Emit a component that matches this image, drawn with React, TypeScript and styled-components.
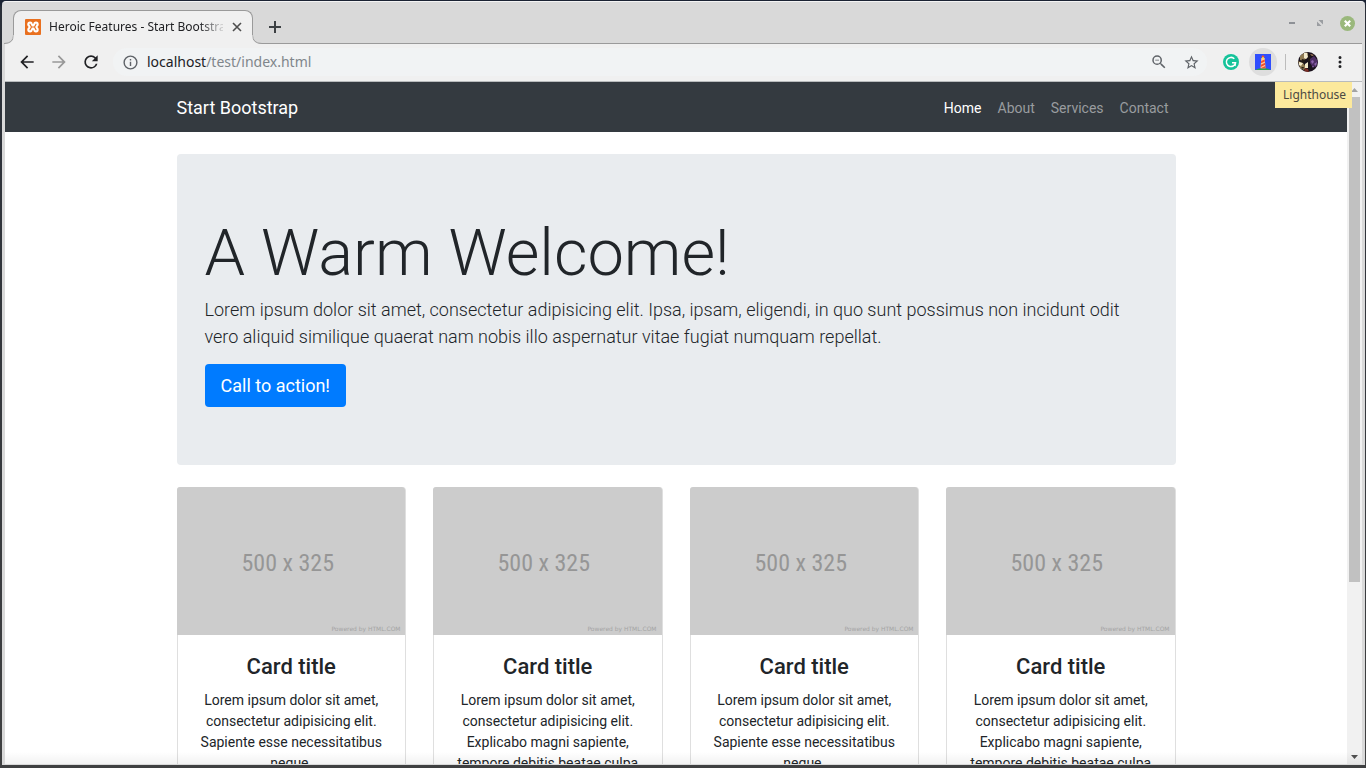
import React from "react";
import styled, { createGlobalStyle } from "styled-components";

const GlobalStyle = createGlobalStyle`
  *, *::before, *::after { box-sizing: border-box; }
  body { margin: 0; background: #3c3c3c; }
  button, input { font: inherit; }
`;

const Desktop = styled.div`
  display: flex;
  height: 100vh;
  padding: 1px 1px 3px 2px;
  background: linear-gradient(#1b2333 0 4px, #2a2f38 8px, #3f4041);
`;

const Window = styled.div`
  flex: 1;
  min-width: 0;
  display: flex;
  flex-direction: column;
  padding: 1px 3px 1px;
  background: #d9d9d9;
  border: 0 solid #f4f4f4;
  border-top-width: 1px;
  border-radius: 4px 4px 0 0;
  font-family: "Noto Sans", sans-serif;
`;

const TabStrip = styled.header`
  display: flex;
  align-items: flex-end;
  height: 41px;
  flex: none;
  padding-left: 8px;
  border-bottom: 1px solid #9a9a9a;
`;

const Tab = styled.div`
  display: flex;
  align-items: center;
  gap: 8px;
  position: relative;
  width: 240px;
  height: 34px;
  margin-bottom: -1px;
  padding: 0 9px 1px 11px;
  background: #f0f0f0;
  border: 1px solid #9a9a9a;
  border-bottom: 0;
  border-radius: 8px 8px 0 0;
`;

const TabFoot = styled.svg<{ $side: "left" | "right" }>`
  position: absolute;
  bottom: 0;
  ${(p) => (p.$side === "left" ? "left: -10px;" : "right: -10px;")}
  width: 10px;
  height: 9px;
`;

const TabTitle = styled.span`
  flex: 1;
  overflow: hidden;
  white-space: nowrap;
  font-size: 12px;
  line-height: 18px;
  color: #202124;
  mask-image: linear-gradient(to right, #000 150px, transparent 178px);
`;

const IconButton = styled.button<{ $size?: number; $tint?: string; $color?: string }>`
  display: grid;
  place-items: center;
  flex: none;
  width: ${(p) => p.$size ?? 32}px;
  height: ${(p) => p.$size ?? 32}px;
  padding: 0;
  border: 0;
  border-radius: 50%;
  background: ${(p) => p.$tint ?? "transparent"};
  color: ${(p) => p.$color ?? "#202124"};
`;

const NewTab = styled.div`
  align-self: center;
  padding-left: 8px;
  padding-top: 8px;
  flex: 1;
`;

const WindowControls = styled.div`
  display: flex;
  align-items: center;
  align-self: center;
  gap: 12px;
  padding-right: 7px;
`;

const Toolbar = styled.div`
  display: flex;
  align-items: center;
  flex: none;
  height: 38px;
  padding: 0 6px 1px;
  background: #f0f0f0;
  border-bottom: 1px solid #b8bbbd;
`;

const AddressBar = styled.div`
  display: flex;
  align-items: center;
  flex: 1;
  min-width: 0;
  height: 28px;
  margin: 0 8px 0 6px;
  padding-left: 9px;
  border-radius: 14px;
  background: #f1f3f4;
`;

const Address = styled.span`
  flex: 1;
  padding-left: 9px;
  font-size: 14px;
  line-height: 20px;
  color: #80868b;
  b { font-weight: 400; color: #202124; }
`;

const Divider = styled.span`
  width: 1px;
  height: 16px;
  margin: 0 8px;
  background: #bcbcbc;
`;

const Extension = styled.div`
  position: relative;
  margin-left: 2px;
`;

const ProfileSlot = styled.div`
  margin-right: 2px;
`;

const Tooltip = styled.div`
  position: absolute;
  z-index: 2;
  top: 34px;
  left: 26px;
  padding: 4px 6px 4px 8px;
  background: #fce99c;
  color: #4c4a43;
  font-size: 12px;
  line-height: 18px;
`;

const Viewport = styled.div`
  position: relative;
  display: flex;
  flex: 1;
  min-height: 0;
  background: #fff;
`;

const BottomShade = styled.div`
  position: absolute;
  inset: auto 0 0 0;
  height: 12px;
  background: linear-gradient(transparent, rgba(0, 0, 0, 0.05));
`;

const Page = styled.div`
  flex: 1;
  min-width: 0;
  overflow: hidden;
  font-family: Roboto, sans-serif;
  font-size: 14px;
  line-height: 21px;
  color: #212529;
`;

const Scrollbar = styled.div`
  display: flex;
  flex-direction: column;
  align-items: center;
  width: 15px;
  background: #f1f1f1;
`;

const ScrollTrack = styled.div`
  flex: 1;
  width: 11px;
`;

const ScrollThumb = styled.div`
  height: 74.4%;
  background: #c1c1c1;
`;

const Navbar = styled.nav`
  background: #343a40;
`;

const Container = styled.div`
  width: calc(100% - 28px);
  max-width: 999px;
  margin: 0 auto;
`;

const NavInner = styled(Container)`
  display: flex;
  align-items: center;
  justify-content: space-between;
  height: 50px;
`;

const Brand = styled.a`
  color: #fff;
  font-size: 18px;
  line-height: 27px;
  text-decoration: none;
`;

const NavList = styled.ul`
  display: flex;
  gap: 2px;
  margin: 0;
  padding: 0;
  list-style: none;
`;

const NavLink = styled.a<{ $active?: boolean }>`
  display: block;
  padding: 9px 7px 7px;
  text-decoration: none;
  color: ${(p) => (p.$active ? "#fff" : "#999c9f")};
`;

const Jumbotron = styled.header`
  margin: 22px 0;
  padding: 60px 28px 58px;
  border-radius: 4px;
  background: #e9ecef;
`;

const Headline = styled.h1`
  margin: 0 0 4px;
  font-size: 65px;
  line-height: 78px;
  font-weight: 300;
`;

const Lead = styled.p`
  margin: 0 0 14px;
  font-size: 18px;
  line-height: 27px;
  font-weight: 300;
`;

const CallToAction = styled.a`
  display: inline-block;
  padding: 8px 16px;
  border-radius: 4px;
  background: #007bff;
  color: #fff;
  font-size: 18px;
  line-height: 27px;
  text-decoration: none;
`;

const CardGrid = styled.div`
  display: grid;
  grid-template-columns: repeat(4, 1fr);
  gap: 27px;
  text-align: center;
`;

const Card = styled.article`
  border: 1px solid #dfdfdf;
  border-top: 0;
  border-radius: 4px;
`;

const CardImage = styled.svg`
  display: block;
  width: calc(100% + 1px);
  margin-left: -1px;
  border-radius: 3px 3px 0 0;
  background: #ccc;
`;

const CardBody = styled.div`
  padding: 18px;
`;

const CardTitle = styled.h4`
  margin: 0 0 10px;
  font-size: 22px;
  line-height: 27px;
  font-weight: 500;
`;

const CardText = styled.p`
  margin: 0;
`;

const cards = [
  "Lorem ipsum dolor sit amet, consectetur adipisicing elit. Sapiente esse necessitatibus neque.",
  "Lorem ipsum dolor sit amet, consectetur adipisicing elit. Explicabo magni sapiente, tempore debitis beatae culpa natus architecto.",
  "Lorem ipsum dolor sit amet, consectetur adipisicing elit. Sapiente esse necessitatibus neque.",
  "Lorem ipsum dolor sit amet, consectetur adipisicing elit. Explicabo magni sapiente, tempore debitis beatae culpa natus architecto.",
];

const links = ["Home", "About", "Services", "Contact"];

const Favicon = () => (
  <svg width="16" height="16" viewBox="0 0 16 16">
    <rect width="16" height="16" rx="1" fill="#e9701f" />
    <g fill="#fff">
      <circle cx="5" cy="5.200" r="2.700" />
      <circle cx="11" cy="5.200" r="2.700" />
      <circle cx="5" cy="10.800" r="2.700" />
      <circle cx="11" cy="10.800" r="2.700" />
      <rect x="3.500" y="5" width="9" height="6" />
    </g>
    <path d="M5 5.200L6.500 8 5 10.800M11 5.200L9.500 8l1.500 2.800M6.500 8h3" fill="none" stroke="#e9701f" strokeWidth="1.200" strokeLinecap="round" />
  </svg>
);

const Glyph = ({ d, size = 20 }: { d: string; size?: number }) => (
  <svg width={size} height={size} viewBox="0 0 24 24" fill="currentColor"><path d={d} /></svg>
);

const Grammarly = () => (
  <svg width="16" height="16" viewBox="0 0 16 16">
    <circle cx="8" cy="8" r="8" fill="#15c39a" />
    <path d="M11.300 4.800A4.600 4.600 0 1 0 12.500 8.800H9M12.500 8.800l-.6 3.200" fill="none" stroke="#fff" strokeWidth="1.500" />
  </svg>
);

const LighthouseIcon = () => (
  <svg width="16" height="16" viewBox="0 0 16 16">
    <rect width="16" height="16" fill="#304ffe" />
    <path d="M0 16q8-4 16 0z" fill="#2e9e4f" />
    <path d="M6.300 4h3.400l.8 10.200h-5z" fill="#ffc9a0" />
    <path d="M6 3.200L8 1l2 2.200zM6.200 7l3.500-1.500.2 2-3.900 1.800zM5.900 10.800l4.200-2 .2 2-4.500 2.200zM5.500 14.200l4.900-2.200.1 2.200z" fill="#f4512c" />
    <rect x="7" y="3.200" width="2" height="2" fill="#ffe04d" />
  </svg>
);

const Avatar = () => (
  <svg width="20" height="20" viewBox="0 0 20 20">
    <defs><clipPath id="face"><circle cx="10" cy="10" r="10" /></clipPath></defs>
    <g clipPath="url(#face)">
      <rect width="20" height="20" fill="#1a121c" />
      <path d="M2 4l5-4 3 1-1 5-4 3-3-1zM0 9l5 2 3 4-2 3-4-2z" fill="#8f7a52" />
      <path d="M6 1l3 0 1 4-2 2-2-1zM1 10l4 1-2 3-2-1zM7 12l3-2v6l-3 0z" fill="#f3e9cb" />
      <path d="M4 7l4 1-2 3-3-1zM10 2l2 1v6l-2 1zM3 15l3 0-1 2z" fill="#231a17" />
      <path d="M12 7l4-3 4 5-2 6-4-1-2-3z" fill="#4c2d63" />
      <path d="M13 9l2-1 1 2-2 2zM16 12l3-2-1 4zM14 14l2 0-1 2z" fill="#8b62ab" />
      <path d="M7 16l3 1 1 3H6z" fill="#7d2f26" />
      <path d="M12 2l4 1-2 1z" fill="#b58a62" />
    </g>
  </svg>
);

const Arrow = ({ up }: { up?: boolean }) => (
  <svg width="15" height="15" viewBox="0 0 15 15">
    <path d={up ? "M4 10h7L7.500 6z" : "M4 6h7l-3.500 4z"} fill={up ? "#a3a3a3" : "#505050"} />
  </svg>
);

export default function App() {
  return (
    <>
      <GlobalStyle />
      <Desktop>
        <Window>
          <TabStrip>
            <Tab>
              <TabFoot $side="left" viewBox="0 0 10 9">
                <path d="M0 9V8.500Q9.500 8.500 9.500 0H10V9z" fill="#f0f0f0" />
                <path d="M0 8.500Q9.500 8.500 9.500 0" fill="none" stroke="#9a9a9a" />
                <path d="M10 0V9" stroke="#f0f0f0" />
              </TabFoot>
              <Favicon />
              <TabTitle>Heroic Features - Start Bootstrap</TabTitle>
              <IconButton $size={12} aria-label="Close tab">
                <svg width="10" height="10" viewBox="0 0 10 10"><path d="M1 1l8 8M9 1l-8 8" stroke="#4d4d4d" strokeWidth="1.600" /></svg>
              </IconButton>
              <TabFoot $side="right" viewBox="0 0 10 9">
                <path d="M10 9V8.500Q.5 8.500 .5 0H0V9z" fill="#f0f0f0" />
                <path d="M10 8.500Q.5 8.500 .5 0" fill="none" stroke="#9a9a9a" />
                <path d="M0 0V9" stroke="#f0f0f0" />
              </TabFoot>
            </Tab>
            <NewTab>
              <IconButton $size={28} aria-label="New tab">
                <svg width="12" height="12" viewBox="0 0 12 12"><path d="M6 0v12M0 6h12" stroke="#3c4043" strokeWidth="2" /></svg>
              </IconButton>
            </NewTab>
            <WindowControls>
              <IconButton $size={16} aria-label="Minimize">
                <svg width="8" height="8" viewBox="0 0 8 8"><path d="M1 4h6" stroke="#8e9196" strokeWidth="2" /></svg>
              </IconButton>
              <IconButton $size={16} aria-label="Restore">
                <svg width="8" height="8" viewBox="0 0 8 8"><path d="M2.500 1H7v4.500zM1 2.500V7h4.500z" fill="#9a9da1" /></svg>
              </IconButton>
              <IconButton $size={15} $tint="#9ab87c" aria-label="Close">
                <svg width="9" height="9" viewBox="0 0 9 9"><path d="M1.800 1.800l5.400 5.400M7.200 1.800L1.800 7.200" stroke="#fff" strokeWidth="2.200" /></svg>
              </IconButton>
            </WindowControls>
          </TabStrip>
          <Toolbar>
            <IconButton aria-label="Back"><Glyph d="M20 11H7.830l5.590-5.590L12 4l-8 8 8 8 1.410-1.410L7.830 13H20v-2z" /></IconButton>
            <IconButton $color="#989898" aria-label="Forward"><Glyph d="M12 4l-1.410 1.410L16.170 11H4v2h12.170l-5.580 5.590L12 20l8-8z" /></IconButton>
            <IconButton aria-label="Reload"><Glyph d="M17.650 6.350A7.958 7.958 0 0 0 12 4a8 8 0 1 0 7.730 10h-2.080A5.990 5.990 0 0 1 12 18a6 6 0 1 1 0-12c1.660 0 3.140.69 4.220 1.780L13 11h7V4l-2.350 2.350z" /></IconButton>
            <AddressBar>
              <IconButton $size={16} $color="#5f6368" aria-label="Site information">
                <Glyph size={17} d="M11 17h2v-6h-2v6zm1-15a10 10 0 1 0 0 20 10 10 0 0 0 0-20zm0 18a8 8 0 1 1 0-16 8 8 0 0 1 0 16zM11 9h2V7h-2v2z" />
              </IconButton>
              <Address><b>localhost</b>/test/index.html</Address>
              <IconButton $color="#5f6368" aria-label="Zoom">
                <Glyph size={18} d="M15.500 14h-.79l-.28-.27A6.471 6.471 0 0 0 16 9.500 6.500 6.500 0 1 0 9.500 16c1.610 0 3.090-.59 4.230-1.570l.27.28v.79l5 4.990L20.490 19l-4.990-5zm-6 0a4.500 4.500 0 1 1 0-9 4.500 4.500 0 0 1 0 9zM7 9h5v1H7z" />
              </IconButton>
              <IconButton $color="#5f6368" aria-label="Bookmark">
                <Glyph size={17} d="M22 9.240l-7.190-.62L12 2 9.190 8.630 2 9.240l5.460 4.730L5.820 21 12 17.270 18.180 21l-1.630-7.030L22 9.240zM12 15.400l-3.760 2.270 1-4.280-3.320-2.880 4.380-.38L12 6.100l1.710 4.040 4.380.38-3.320 2.880 1 4.280L12 15.400z" />
              </IconButton>
            </AddressBar>
            <IconButton aria-label="Grammarly"><Grammarly /></IconButton>
            <Extension>
              <IconButton $size={28} $tint="#dedede" aria-label="Lighthouse"><LighthouseIcon /></IconButton>
              <Tooltip role="tooltip">Lighthouse</Tooltip>
            </Extension>
            <Divider />
            <ProfileSlot>
              <IconButton $size={28} aria-label="Profile"><Avatar /></IconButton>
            </ProfileSlot>
            <IconButton aria-label="Menu"><Glyph size={18} d="M12 8a2 2 0 1 0 0-4 2 2 0 0 0 0 4zm0 2a2 2 0 1 0 0 4 2 2 0 0 0 0-4zm0 6a2 2 0 1 0 0 4 2 2 0 0 0 0-4z" /></IconButton>
          </Toolbar>
          <Viewport>
            <Page>
              <Navbar>
                <NavInner>
                  <Brand href="#">Start Bootstrap</Brand>
                  <NavList>
                    {links.map((l, i) => (
                      <li key={l}><NavLink href="#" $active={i === 0}>{l}</NavLink></li>
                    ))}
                  </NavList>
                </NavInner>
              </Navbar>
              <Container as="main">
                <Jumbotron>
                  <Headline>A Warm Welcome!</Headline>
                  <Lead>
                    Lorem ipsum dolor sit amet, consectetur adipisicing elit. Ipsa, ipsam, eligendi, in quo sunt possimus non
                    incidunt odit vero aliquid similique quaerat nam nobis illo aspernatur vitae fugiat numquam repellat.
                  </Lead>
                  <CallToAction href="#">Call to action!</CallToAction>
                </Jumbotron>
                <CardGrid>
                  {cards.map((text, i) => (
                    <Card key={i}>
                      <CardImage viewBox="0 0 229 148" role="img" aria-label="500 x 325">
                        <text x="111" y="84" textAnchor="middle" fontFamily="'Roboto Condensed', Roboto, sans-serif" fontSize="24" fill="#969696">500 x 325</text>
                        <text x="224" y="144" textAnchor="end" fontFamily="'DejaVu Sans', sans-serif" fontSize="6" fill="#a4a4a4">Powered by HTML.COM</text>
                      </CardImage>
                      <CardBody>
                        <CardTitle>Card title</CardTitle>
                        <CardText>{text}</CardText>
                      </CardBody>
                    </Card>
                  ))}
                </CardGrid>
              </Container>
            </Page>
            <Scrollbar aria-hidden="true">
              <Arrow up />
              <ScrollTrack><ScrollThumb /></ScrollTrack>
              <Arrow />
            </Scrollbar>
            <BottomShade />
          </Viewport>
        </Window>
      </Desktop>
    </>
  );
}
